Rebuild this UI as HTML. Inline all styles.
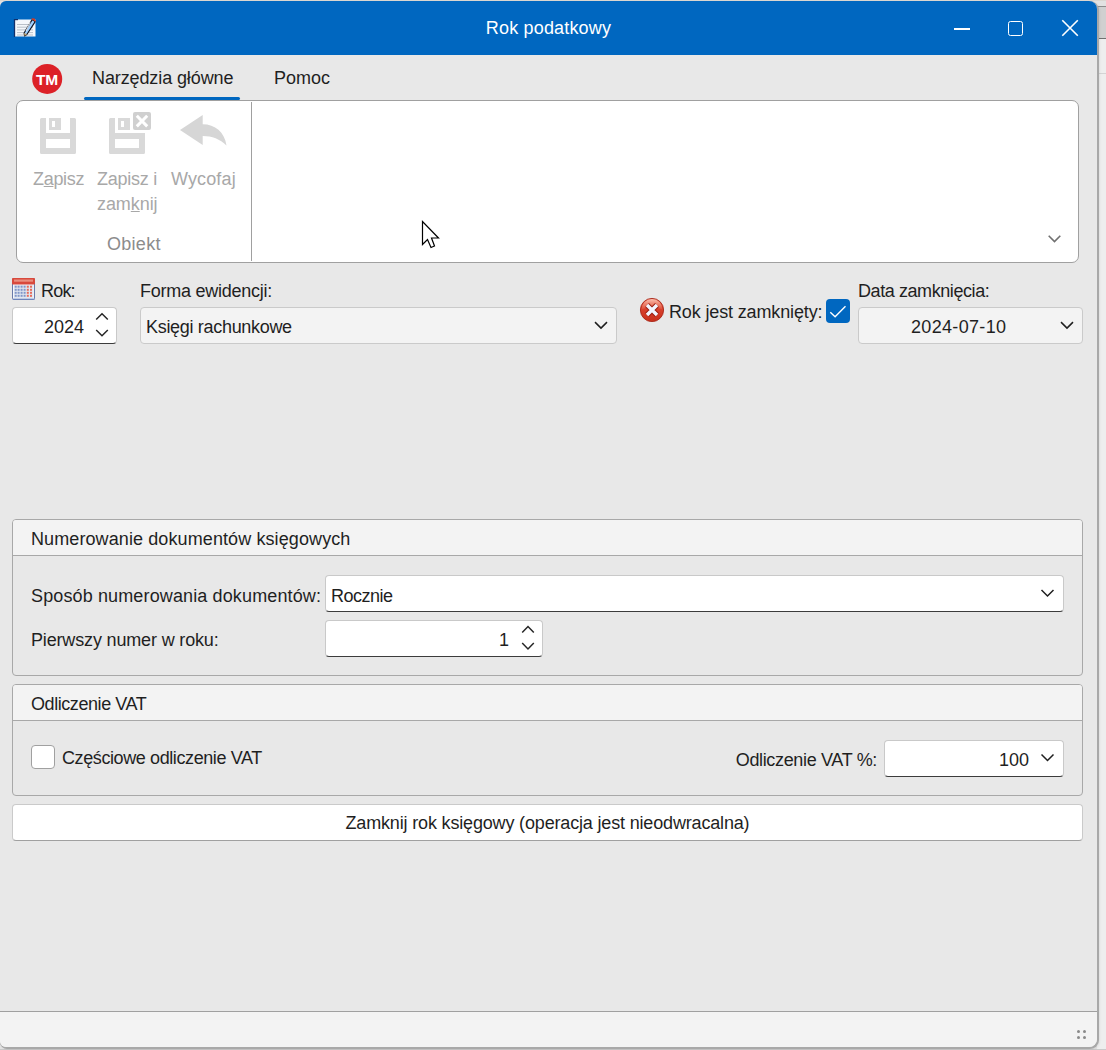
<!DOCTYPE html>
<html><head><meta charset="utf-8">
<style>
*{margin:0;padding:0;box-sizing:border-box}
html,body{width:1106px;height:1050px;overflow:hidden;background:#e2e2e2;font-family:"Liberation Sans",sans-serif;}
.a{position:absolute}
.t{position:absolute;white-space:nowrap;font-size:18px;line-height:20px;color:#1f1f1f}
#frame{position:absolute;left:0;top:1px;width:1097px;height:1046px;background:#e8e8e8;box-shadow:1px 1px 0 1px #a8a8a8,2px 2px 3px rgba(0,0,0,0.12);border-radius:6px 8px 8px 6px;overflow:hidden}
.box{position:absolute;background:#fff;border:1px solid #c9c9c9;border-bottom-color:#8c8c8c;border-radius:4px}
.chev{position:absolute}
</style></head><body>
<!-- desktop background bits -->
<div class="a" style="left:1097px;top:6px;width:9px;height:33px;background:#d0d0d0;border-top:1px solid #8c8c8c;border-bottom:1px solid #707070"></div>
<div class="a" style="left:1097px;top:39px;width:9px;height:1011px;background:#eeeeee"></div>
<div class="a" style="left:1097px;top:73px;width:9px;height:1px;background:#d4d4d4"></div>
<div class="a" style="left:0;top:1049px;width:1106px;height:1px;background:#cacaca"></div>
<div class="a" style="left:0;top:0;width:1106px;height:1px;background:#dcd7d1"></div>

<div id="frame">
  <div class="a" style="left:0;top:0;width:1097px;height:54px;background:#0067c0"></div>
  <div class="a" style="left:0;top:1010px;width:1097px;height:36px;background:#f3f3f3;border-top:1px solid #a0a0a0"></div>
</div>
<!-- title bar content -->
<svg class="a" style="left:12px;top:16px" width="26" height="24" viewBox="12 16 26 24">
  <rect x="14.5" y="19.5" width="21" height="17" fill="#f4f7fb"/>
  <path d="M14.5 19V37" stroke="#13306a" stroke-width="1.3"/>
  <path d="M14.5 19.6H18" stroke="#13306a" stroke-width="1.2"/>
  <path d="M17 24.5H33M17 27.2H33M17 29.9H33M17 32.6H33M17 35H33" stroke="#b9c0c9" stroke-width="1"/>
  <path d="M32.2 19.6L35.2 21.6L27 34.2L24.6 36L24.1 33Z" fill="#9fd0ff" stroke="#0a1020" stroke-width="1.1" stroke-linejoin="round"/>
  <path d="M30.2 22.5L26 31" stroke="#ffffff" stroke-width="0.9"/>
  <path d="M31.4 18.2L34.6 18.6L36 21L35.2 21.6L32.2 19.6Z" fill="#d9381e"/>
  <path d="M24.1 33L24.6 36L27 34.2Z" fill="#c8a870"/>
</svg>
<div class="t" style="left:0;width:1097px;text-align:center;top:18px;color:#fff;letter-spacing:0.17px">Rok podatkowy</div>
<div class="a" style="left:954px;top:28px;width:15.5px;height:1.5px;background:#fff"></div>
<div class="a" style="left:1008.3px;top:20.7px;width:15px;height:15px;border:1.7px solid #fff;border-radius:2.5px"></div>
<svg class="a" style="left:1058px;top:16px" width="24" height="24" viewBox="1058 16 24 24"><path d="M1062.3 20.3L1077.8 35.8M1077.8 20.3L1062.3 35.8" stroke="#fff" stroke-width="1.6"/></svg>

<!-- menu -->
<svg class="a" style="left:30px;top:62px" width="34" height="34" viewBox="30 62 34 34"><circle cx="47.2" cy="78.9" r="15" fill="#dc2127"/><text x="47" y="84.7" text-anchor="middle" font-family="Liberation Sans" font-weight="bold" font-size="15.5" fill="#fff" letter-spacing="-0.3">TM</text></svg>
<div class="t" style="left:92px;top:68px;letter-spacing:-0.11px">Narzędzia główne</div>
<div class="a" style="left:84px;top:97px;width:156px;height:3px;background:#0067c0;border-radius:1.5px"></div>
<div class="t" style="left:274px;top:68px">Pomoc</div>

<!-- ribbon -->
<div class="a" style="left:16px;top:100px;width:1063px;height:163px;background:#fff;border:1px solid #a0a0a0;border-radius:7px"></div>
<div class="a" style="left:251px;top:102px;width:1px;height:159px;background:#a0a0a0"></div>
<svg class="a" style="left:0;top:100px" width="260" height="60" viewBox="0 100 260 60">
  <path fill="#d9d9d9" fill-rule="evenodd" d="M41.5 118H74.5Q76 118 76 119.5V152.5Q76 154 74.5 154H41.5Q40 154 40 152.5V119.5Q40 118 41.5 118Z M46 118H70V133H46Z M49 118H61V130H49Z M52 121H55V127H52Z M46 139H70V148H46Z"/>
  <path fill="#d9d9d9" fill-rule="evenodd" d="M110.5 118H115V133H145V152.5Q145 154 143.5 154H110.5Q109 154 109 152.5V119.5Q109 118 110.5 118Z M115 139H139V148H115Z M118 118H130V130H118Z M121 121H124V127H121Z"/>
  <rect x="133" y="112" width="18" height="18" rx="2" fill="#d0d0d0"/>
  <path d="M136.8 115.8L147.2 126.4M147.2 115.8L136.8 126.4" stroke="#fff" stroke-width="3"/>
  <path fill="#d6d6d6" d="M180 130L202.7 115V124.3C215 124.3 224.5 132 226.5 145.4C220 139 212 135.9 202.7 135.9V145Z"/>
</svg>
<div class="t" style="left:33px;top:169px;color:#a8a8a8;letter-spacing:-0.32px">Z<u>a</u>pisz</div>
<div class="t" style="left:97px;top:169px;color:#a8a8a8;letter-spacing:-0.26px">Zapisz i</div>
<div class="t" style="left:97px;top:194px;color:#a8a8a8;letter-spacing:-0.07px">zam<u>k</u>nij</div>
<div class="t" style="left:171px;top:169px;color:#a8a8a8;letter-spacing:0.13px">Wycofaj</div>
<div class="t" style="left:107px;top:234px;color:#8c8c8c;letter-spacing:0.28px">Obiekt</div>
<svg class="a" style="left:1044px;top:230px" width="20" height="16" viewBox="1044 230 20 16"><path d="M1048.7 235.8L1054.5 241.6L1060.3 235.8" fill="none" stroke="#707070" stroke-width="1.6"/></svg>

<!-- cursor -->
<svg class="a" style="left:418px;top:216px" width="26" height="36" viewBox="418 216 26 36">
  <path d="M422.5 221.5V244.5L427.5 239.5L431 247.5L434.5 246L431.5 238H438.5Z" fill="#fff" stroke="#000" stroke-width="1.2" stroke-linejoin="miter"/>
</svg>

<!-- form row -->
<svg class="a" style="left:10px;top:276px" width="28" height="26" viewBox="10 276 28 26">
  <rect x="12.5" y="278.5" width="22" height="21" rx="1" fill="#f4f7fc" stroke="#6a7aa8" stroke-width="1"/>
  <rect x="14" y="285" width="19.5" height="13" fill="#e2e7f0"/>
  <rect x="12" y="278" width="23" height="6.5" rx="1" fill="#d8493c"/>
  <rect x="14" y="279.5" width="19" height="2.2" fill="#eea090" opacity="0.8"/>
  <path d="M13 299.2H34.5" stroke="#7088c0" stroke-width="1.2"/>
  <rect x="14.7" y="285.7" width="2" height="2" fill="#8096c8"/><rect x="14.7" y="288.8" width="2" height="2" fill="#8096c8"/><rect x="14.7" y="291.8" width="2" height="2" fill="#8096c8"/><rect x="14.7" y="294.8" width="2" height="2" fill="#8096c8"/><rect x="17.6" y="285.7" width="2" height="2" fill="#8096c8"/><rect x="17.6" y="288.8" width="2" height="2" fill="#8096c8"/><rect x="17.6" y="291.8" width="2" height="2" fill="#8096c8"/><rect x="17.6" y="294.8" width="2" height="2" fill="#8096c8"/><rect x="20.6" y="285.7" width="2" height="2" fill="#8096c8"/><rect x="20.6" y="288.8" width="2" height="2" fill="#8096c8"/><rect x="20.6" y="291.8" width="2" height="2" fill="#8096c8"/><rect x="20.6" y="294.8" width="2" height="2" fill="#8096c8"/><rect x="23.6" y="285.7" width="2" height="2" fill="#8096c8"/><rect x="23.6" y="288.8" width="2" height="2" fill="#8096c8"/><rect x="23.6" y="291.8" width="2" height="2" fill="#8096c8"/><rect x="23.6" y="294.8" width="2" height="2" fill="#8096c8"/><rect x="26.8" y="285.7" width="2" height="2" fill="#e66a5a"/><rect x="26.8" y="288.8" width="2" height="2" fill="#e66a5a"/><rect x="26.8" y="291.8" width="2" height="2" fill="#e66a5a"/><rect x="26.8" y="294.8" width="2" height="2" fill="#e66a5a"/><rect x="30.0" y="285.7" width="2" height="2" fill="#e66a5a"/><rect x="30.0" y="288.8" width="2" height="2" fill="#e66a5a"/><rect x="30.0" y="291.8" width="2" height="2" fill="#e66a5a"/><rect x="30.0" y="294.8" width="2" height="2" fill="#e66a5a"/>
</svg>
<div class="t" style="left:41px;top:281px;letter-spacing:-0.8px">Rok:</div>
<div class="t" style="left:140px;top:281px;letter-spacing:-0.25px">Forma ewidencji:</div>
<div class="box" style="left:12px;top:307px;width:105px;height:37px;border-bottom:1.5px solid #3c3c3c"></div>
<div class="t" style="left:20px;width:64px;text-align:right;top:317px">2024</div>
<svg class="a" style="left:90px;top:308px" width="24" height="34" viewBox="90 308 24 34"><path d="M96.2 319.5L102 313.8L107.8 319.5M96.2 330L102 335.7L107.8 330" fill="none" stroke="#262626" stroke-width="1.5"/></svg>
<div class="box" style="left:140px;top:307px;width:477px;height:37px;background:#f3f3f3;border-color:#cacaca"></div>
<div class="t" style="left:146px;top:317px;letter-spacing:-0.31px">Księgi rachunkowe</div>
<svg class="a" style="left:590px;top:315px" width="22" height="18" viewBox="590 315 22 18"><path d="M595 322.1L601 328.1L607 322.1" fill="none" stroke="#1f1f1f" stroke-width="1.5"/></svg>

<svg class="a" style="left:638px;top:296px" width="28" height="28" viewBox="638 296 28 28">
  <defs><linearGradient id="rg" x1="0" y1="0" x2="0" y2="1"><stop offset="0" stop-color="#e8604c"/><stop offset="0.45" stop-color="#d8402c"/><stop offset="1" stop-color="#c8301c"/></linearGradient>
  <linearGradient id="hl" x1="0" y1="0" x2="0" y2="1"><stop offset="0" stop-color="#f9c0b0"/><stop offset="1" stop-color="#f08a70" stop-opacity="0.2"/></linearGradient></defs>
  <circle cx="652" cy="310" r="11.6" fill="url(#rg)" stroke="#a8281a" stroke-width="0.9"/>
  <path d="M641.5 309.5A10.5 10.5 0 0 1 662.5 309.5Q652 305 641.5 309.5Z" fill="url(#hl)"/>
  <path d="M647 305L657 315M657 305L647 315" stroke="#9a1e12" stroke-width="5.4"/>
  <path d="M647 305L657 315M657 305L647 315" stroke="#f2f6ff" stroke-width="3.4"/>
</svg>
<div class="t" style="left:669px;top:302px;letter-spacing:-0.14px">Rok jest zamknięty:</div>
<div class="a" style="left:826px;top:299px;width:24px;height:24px;border-radius:4px;background:#0067c0"></div>
<svg class="a" style="left:826px;top:299px" width="24" height="24" viewBox="826 299 24 24"><path d="M830.3 312.2L835.1 316.7L845.5 306.2" fill="none" stroke="#fff" stroke-width="1.4"/></svg>
<div class="t" style="left:858px;top:281px;letter-spacing:-0.42px">Data zamknięcia:</div>
<div class="box" style="left:858px;top:307px;width:225px;height:37px;background:#f3f3f3;border-color:#cacaca"></div>
<div class="t" style="left:911px;top:317px;letter-spacing:0.33px">2024-07-10</div>
<svg class="a" style="left:1055px;top:315px" width="22" height="18" viewBox="1055 315 22 18"><path d="M1061 322.1L1067 328.1L1073 322.1" fill="none" stroke="#1f1f1f" stroke-width="1.5"/></svg>

<!-- group 1 -->
<div class="a" style="left:12px;top:519px;width:1071px;height:157px;border:1px solid #a8a8a8;border-radius:4px;background:#e8e8e8;overflow:hidden">
  <div class="a" style="left:0;top:0;width:1069px;height:36px;background:#f3f3f3;border-bottom:1px solid #a8a8a8"></div>
</div>
<div class="t" style="left:31px;top:529px;letter-spacing:0.1px">Numerowanie dokumentów księgowych</div>
<div class="t" style="left:31px;top:586px;letter-spacing:0.13px">Sposób numerowania dokumentów:</div>
<div class="box" style="left:325px;top:575px;width:739px;height:37px;border-bottom:1.5px solid #3c3c3c"></div>
<div class="t" style="left:331px;top:586px;letter-spacing:-0.5px">Rocznie</div>
<svg class="a" style="left:1036px;top:583px" width="22" height="18" viewBox="1036 583 22 18"><path d="M1041.5 590L1047.5 596L1053.5 590" fill="none" stroke="#1f1f1f" stroke-width="1.5"/></svg>
<div class="t" style="left:31px;top:630px;letter-spacing:-0.16px">Pierwszy numer w roku:</div>
<div class="box" style="left:325px;top:620px;width:218px;height:37px;border-bottom:1.5px solid #3c3c3c"></div>
<div class="t" style="left:400px;width:109px;text-align:right;top:630px">1</div>
<svg class="a" style="left:516px;top:621px" width="24" height="34" viewBox="516 621 24 34"><path d="M522.2 632.6L528 626.6L533.8 632.6M522.2 643L528 649L533.8 643" fill="none" stroke="#262626" stroke-width="1.5"/></svg>

<!-- group 2 -->
<div class="a" style="left:12px;top:684px;width:1071px;height:112px;border:1px solid #a8a8a8;border-radius:4px;background:#e8e8e8;overflow:hidden">
  <div class="a" style="left:0;top:0;width:1069px;height:36px;background:#f3f3f3;border-bottom:1px solid #a8a8a8"></div>
</div>
<div class="t" style="left:31px;top:694px;letter-spacing:-0.43px">Odliczenie VAT</div>
<div class="a" style="left:31px;top:745px;width:24px;height:24px;border:1px solid #a0a0a0;border-radius:4px;background:#fff"></div>
<div class="t" style="left:62px;top:748px;letter-spacing:-0.4px">Częściowe odliczenie VAT</div>
<div class="t" style="left:600px;width:277px;text-align:right;top:750px;letter-spacing:-0.34px">Odliczenie VAT %:</div>
<div class="box" style="left:884px;top:740px;width:180px;height:37px;border-bottom:1.5px solid #3c3c3c"></div>
<div class="t" style="left:950px;width:79px;text-align:right;top:750px">100</div>
<svg class="a" style="left:1036px;top:748px" width="22" height="18" viewBox="1036 748 22 18"><path d="M1041.5 754.5L1047.5 760.5L1053.5 754.5" fill="none" stroke="#1f1f1f" stroke-width="1.5"/></svg>

<!-- button -->
<div class="box" style="left:12px;top:804px;width:1071px;height:37px;border-color:#cacaca;border-bottom-color:#a0a0a0"></div>
<div class="t" style="left:12px;width:1071px;text-align:center;top:813px;letter-spacing:-0.165px">Zamknij rok księgowy (operacja jest nieodwracalna)</div>

<!-- grip -->
<svg class="a" style="left:1074px;top:1027px" width="14" height="14" viewBox="1074 1027 14 14"><g fill="#8a8a8a"><circle cx="1078.5" cy="1031.5" r="1.5"/><circle cx="1084.5" cy="1031.5" r="1.5"/><circle cx="1078.5" cy="1037.5" r="1.5"/><circle cx="1084.5" cy="1037.5" r="1.5"/></g></svg>
</body></html>
